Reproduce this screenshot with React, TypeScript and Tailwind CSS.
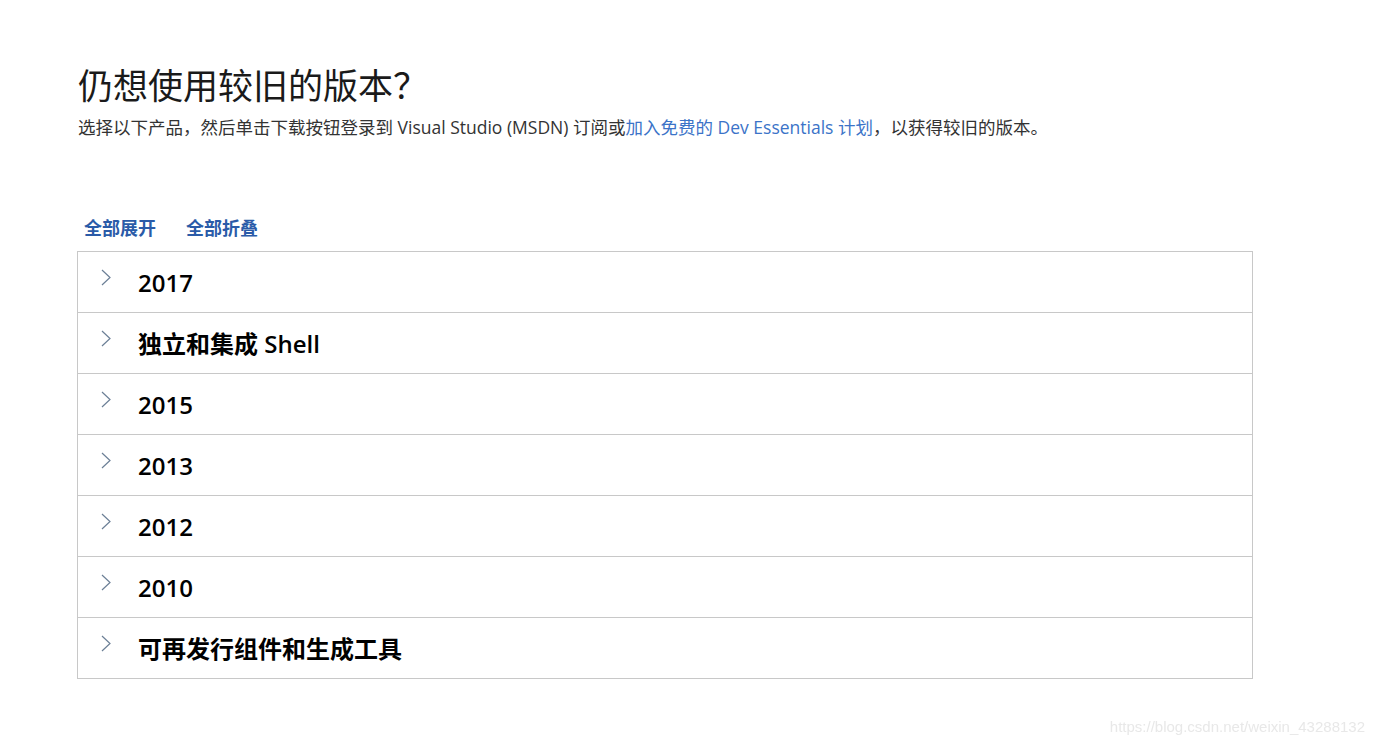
import { useState } from "react";

const versions = [
  "2017",
  "独立和集成 Shell",
  "2015",
  "2013",
  "2012",
  "2010",
  "可再发行组件和生成工具",
];

const sans = "font-['Segoe_UI','Open_Sans','Noto_Sans_CJK_SC',sans-serif]";
const cjk = "font-['Noto_Sans_CJK_SC',sans-serif]";

function Chevron() {
  return (
    <svg width="10" height="17" viewBox="0 0 10 17" className="shrink-0">
      <path d="M1 1 L9 8.5 L1 16" fill="none" stroke="#6b7f96" strokeWidth="1.2" />
    </svg>
  );
}

export default function App() {
  const [open, setOpen] = useState<Record<number, boolean>>({});

  return (
    <div className="min-h-[748px] w-full bg-white">
      <div className="pl-[77px] pt-[62px]">
        <h1 className={`${cjk} pl-[1px] text-[35px] leading-[44px] text-[#1a1a1a]`}>
          仍想使用较旧的版本？
        </h1>
        <p className={`${sans} mt-[9px] pl-[1px] text-[17.5px] leading-[24px] text-[#333]`}>
          选择以下产品，然后单击下载按钮登录到 Visual Studio (MSDN) 订阅或
          <a className="text-[#3b73c8]">加入免费的 Dev Essentials 计划</a>
          ，以获得较旧的版本。
        </p>

        <div className={`${cjk} mt-[76px] flex gap-[30px] pl-[7px] text-[18px] font-bold leading-[24px] text-[#2a5ba8]`}>
          <button onClick={() => setOpen(Object.fromEntries(versions.map((_, i) => [i, true])))}>
            全部展开
          </button>
          <button onClick={() => setOpen({})}>全部折叠</button>
        </div>

        <div className="mt-[12px] w-[1176px] border border-[#c8c8c8]">
          {versions.map((v, i) => (
            <div
              key={v}
              onClick={() => setOpen({ ...open, [i]: !open[i] })}
              className={`flex cursor-pointer items-start ${i > 0 ? "h-[61px] border-t border-[#c8c8c8]" : "h-[60px]"}`}
            >
              <div className="ml-[23px] mt-[17px]">
                <Chevron />
              </div>
              <span className={`${sans} ml-[27px] mt-[15px] text-[24px] font-semibold leading-[32px] text-black`}>
                {v}
              </span>
            </div>
          ))}
        </div>
      </div>

      <div className="fixed bottom-[10px] right-[10px] font-['Liberation_Sans',sans-serif] text-[15px] text-[#e8e8e8]">
        https://blog.csdn.net/weixin_43288132
      </div>
    </div>
  );
}
